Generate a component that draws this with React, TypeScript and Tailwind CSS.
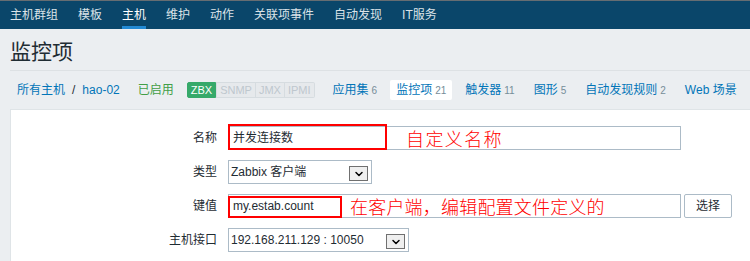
import { ChevronDown } from 'lucide-react'

const navItems = ['主机群组', '模板', '主机', '维护', '动作', '关联项事件', '自动发现', 'IT服务']

const tabs: { label: string; count?: string; active?: boolean }[] = [
  { label: '应用集', count: '6' },
  { label: '监控项', count: '21', active: true },
  { label: '触发器', count: '11' },
  { label: '图形', count: '5' },
  { label: '自动发现规则', count: '2' },
  { label: 'Web 场景' },
]

const font = { fontFamily: '"Liberation Sans", Arial, "Noto Sans CJK SC", sans-serif' }

function SelectBox({ value, width }: { value: string; width: string }) {
  return (
    <div className={`relative h-[24px] ${width} border border-[#acbbc7] bg-white flex items-center pl-[2px] text-[12px] text-[#1f2c33] whitespace-nowrap`}>
      {value}
      <div className="absolute right-[3px] top-[5px] w-[19px] h-[15px] border border-[#707070] bg-[#efefef] flex items-center justify-center">
        <ChevronDown size={12} strokeWidth={3} className="text-black" />
      </div>
    </div>
  )
}

function Row({ label, children }: { label: string; children: React.ReactNode }) {
  return (
    <div className="flex items-center h-[24px]">
      <div className="w-[206px] shrink-0 text-right text-[12px] text-[#1f2c33]">{label}</div>
      <div className="pl-[11px] flex items-center">{children}</div>
    </div>
  )
}

export default function App() {
  return (
    <div className="w-[750px] h-[261px] overflow-hidden bg-[#ebeef1]" style={font}>
      {/* top menu */}
      <div className="h-[29px] border-t border-[#666d72] bg-[#0a466a] flex items-stretch gap-[20px] pl-[10px] text-[12px] whitespace-nowrap">
        {navItems.map((item) => (
          <div
            key={item}
            className={
              item === '主机'
                ? 'flex items-center text-white border-b-[3px] border-[#2289d3] pt-[3px]'
                : 'flex items-center text-[#dbe3e8]'
            }
          >
            {item}
          </div>
        ))}
      </div>

      {/* title */}
      <div className="ml-[10px] h-[42px] border-b border-[#dde1e4] pt-[10px]">
        <h1 className="text-[21px] leading-[25px] text-[#1f2c33] font-normal">监控项</h1>
      </div>

      {/* breadcrumbs + tabs */}
      <div className="h-[38px] flex items-center text-[12px] pl-[17px] whitespace-nowrap w-[800px]">
        <span className="text-[#0275b8]">所有主机</span>
        <span className="text-[#1f2c33] mx-[7px]">/</span>
        <span className="text-[#0275b8]">hao-02</span>
        <span className="text-[#429e47] ml-[18px]">已启用</span>
        <div className="flex shrink-0 ml-[13px] text-[11px] leading-[14px]">
          <span className="bg-[#36a96a] border border-[#36a96a] text-white px-[3px] rounded-l-[2px]">ZBX</span>
          <span className="bg-[#e6e9ec] border border-[#d6dce0] text-[#bec7ce] px-[3px]">SNMP</span>
          <span className="bg-[#e6e9ec] border border-l-0 border-[#d6dce0] text-[#bec7ce] px-[3px]">JMX</span>
          <span className="bg-[#e6e9ec] border border-l-0 border-[#d6dce0] text-[#bec7ce] px-[3px] rounded-r-[2px]">IPMI</span>
        </div>
        <div className="flex shrink-0 items-center ml-[12px] gap-[7px]">
          {tabs.map((t) => (
            <div
              key={t.label}
              className={`flex shrink-0 items-center h-[20px] px-[6px] rounded-[2px] ${t.active ? 'bg-white' : ''}`}
            >
              <span className="text-[#0275b8]">{t.label}</span>
              {t.count && <span className="text-[#768d99] text-[10px] ml-[3px]">{t.count}</span>}
            </div>
          ))}
        </div>
      </div>

      {/* form */}
      <div className="ml-[10px] h-[200px] bg-white border-l border-t border-[#dfe4e7] pt-[16px] flex flex-col gap-[10px]">
        <Row label="名称">
          <div className="relative w-[453px] h-[24px] border border-[#acbbc7] flex items-center pl-[4px] text-[12px] text-[#1f2c33]">
            并发连接数
            <div className="absolute -left-px -top-[3px] w-[159px] h-[26px] border-2 border-[#ff0000]" />
            <span
              className="absolute left-[177px] top-[0px] text-[18px] leading-[22px] tracking-[1.4px] text-[#ff0000] font-light whitespace-nowrap"
              style={{ fontFamily: '"Noto Sans CJK SC", sans-serif' }}
            >
              自定义名称
            </span>
          </div>
        </Row>
        <Row label="类型">
          <SelectBox value="Zabbix 客户端" width="w-[144px]" />
        </Row>
        <Row label="键值">
          <div className="relative w-[453px] h-[24px] border border-[#acbbc7] flex items-center pl-[4px] text-[12px] text-[#1f2c33]">
            my.estab.count
            <div className="absolute -left-px top-[1px] w-[114px] h-[22px] border-2 border-[#ff0000]" />
            <span
              className="absolute left-[121px] top-[0px] text-[18px] leading-[22px] tracking-[0.2px] text-[#ff0000] font-light whitespace-nowrap"
              style={{ fontFamily: '"Noto Sans CJK SC", sans-serif' }}
            >
              在客户端，编辑配置文件定义的
            </span>
          </div>
          <button className="ml-[3px] w-[48px] h-[24px] border border-[#acbbc7] rounded-[2px] bg-white text-[12px] text-[#1f2c33]">
            选择
          </button>
        </Row>
        <Row label="主机接口">
          <SelectBox value="192.168.211.129 : 10050" width="w-[181px]" />
        </Row>
      </div>
    </div>
  )
}
